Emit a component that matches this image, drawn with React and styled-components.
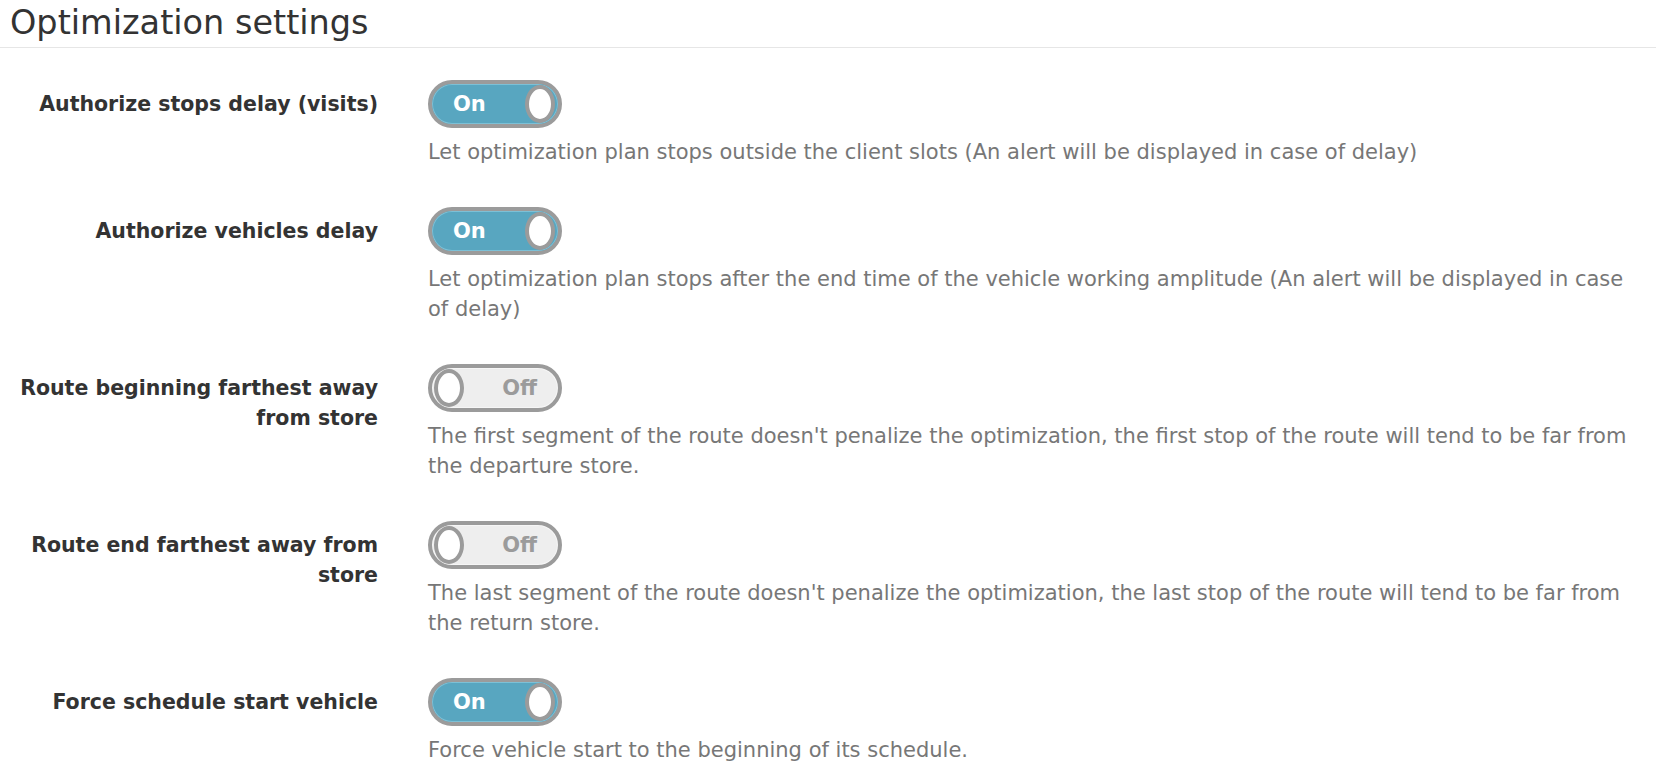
import React from 'react'
import styled, { createGlobalStyle } from 'styled-components'

const GlobalStyle = createGlobalStyle`
  body {
    margin: 0;
    background: #fff;
    font-family: "DejaVu Sans", Verdana, sans-serif;
    color: #333;
  }
`

const settings = [
  {
    label: 'Authorize stops delay (visits)',
    on: true,
    help: 'Let optimization plan stops outside the client slots (An alert will be displayed in case of delay)',
  },
  {
    label: 'Authorize vehicles delay',
    on: true,
    help: 'Let optimization plan stops after the end time of the vehicle working amplitude (An alert will be displayed in case of delay)',
  },
  {
    label: 'Route beginning farthest away from store',
    on: false,
    help: "The first segment of the route doesn't penalize the optimization, the first stop of the route will tend to be far from the departure store.",
  },
  {
    label: 'Route end farthest away from store',
    on: false,
    help: "The last segment of the route doesn't penalize the optimization, the last stop of the route will tend to be far from the return store.",
  },
  {
    label: 'Force schedule start vehicle',
    on: true,
    help: 'Force vehicle start to the beginning of its schedule.',
  },
]

const App = () => {
  return (
    <>
      <GlobalStyle />
      <Page>
        <Title>Optimization settings</Title>
        <Form>
          {settings.map((s) => (
            <Row key={s.label}>
              <Label>{s.label}</Label>
              <Field>
                <Toggle $on={s.on}>
                  <ToggleText $on={s.on}>{s.on ? 'On' : 'Off'}</ToggleText>
                  <Knob $on={s.on} />
                </Toggle>
                <Help>{s.help}</Help>
              </Field>
            </Row>
          ))}
        </Form>
      </Page>
    </>
  )
}

export default App

const Page = styled.div`
  width: 1656px;
`

const Title = styled.h1`
  margin: 0;
  height: 48px;
  box-sizing: border-box;
  padding: 2px 10px 0;
  font-size: 33.5px;
  font-weight: normal;
  line-height: 42px;
  color: #333;
  border-bottom: 1px solid #e6e6e6;
`

const Form = styled.div`
  padding-top: 32px;
  display: flex;
  flex-direction: column;
  gap: 40px;
`

const Row = styled.div`
  display: grid;
  grid-template-columns: 378px 1200px;
  column-gap: 50px;
`

const Label = styled.div`
  padding-top: 9px;
  padding-left: 8px;
  text-align: right;
  font-weight: bold;
  font-size: 20.5px;
  line-height: 30px;
  color: #333;
`

const Field = styled.div`
  display: flex;
  flex-direction: column;
  align-items: flex-start;
`

const Toggle = styled.div`
  position: relative;
  width: 134px;
  height: 48px;
  box-sizing: border-box;
  border: 4px solid #9b9b9b;
  border-radius: 24px;
  background: ${(p) => (p.$on ? '#58a6c0' : '#eeeeee')};
  box-shadow: inset 0 0 0 1px ${(p) => (p.$on ? '#7cc0d6' : '#f6f6f6')};
`

const ToggleText = styled.span`
  position: absolute;
  top: 0;
  bottom: 0;
  display: flex;
  align-items: center;
  ${(p) => (p.$on ? 'left: 21px;' : 'right: 21px;')}
  font-weight: bold;
  font-size: 21px;
  color: ${(p) => (p.$on ? '#fff' : '#9b9b9b')};
`

const Knob = styled.div`
  position: absolute;
  top: 1px;
  ${(p) => (p.$on ? 'right: 3px;' : 'left: 2px;')}
  width: 30px;
  height: 38px;
  box-sizing: border-box;
  border: 4px solid #9b9b9b;
  border-radius: 50%;
  background: #fff;
`

const Help = styled.div`
  margin-top: 9px;
  font-size: 21px;
  line-height: 30px;
  color: #777;
`
